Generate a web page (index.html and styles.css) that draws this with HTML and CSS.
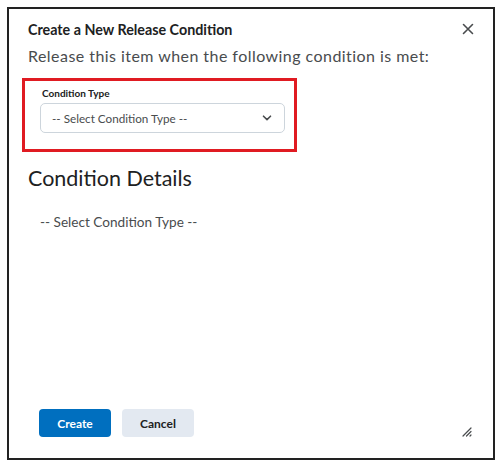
FILE: index.html
```html
<!DOCTYPE html>
<html lang="en">
  <head>
    <meta charset="UTF-8" />
    <title>Create a New Release Condition</title>
    <link rel="stylesheet" href="styles.css">
  </head>
  <body>
    <div class="dialog">
      <div class="dialog-header">
        <h2 class="dialog-title">Create a New Release Condition</h2>
        <button class="close-btn" aria-label="Close">
          <svg width="12" height="12" viewBox="0 0 12 12">
            <path d="M1.5 1.5 L10.5 10.5 M10.5 1.5 L1.5 10.5" stroke="#494c4e" stroke-width="1.6" stroke-linecap="round" />
          </svg>
        </button>
      </div>
      <p class="intro">Release this item when the following condition is met:</p>

      <div class="highlight">
        <label class="field-label" for="condition-type">Condition Type</label>
        <div class="select" id="condition-type">
          <span>-- Select Condition Type --</span>
          <svg width="10" height="6" viewBox="0 0 10 6">
            <path d="M1.5 1.2 L5 4.6 L8.5 1.2" fill="none" stroke="#494c4e" stroke-width="1.6" stroke-linecap="round" stroke-linejoin="round" />
          </svg>
        </div>
      </div>

      <h3 class="details-title">Condition Details</h3>
      <p class="details-empty">-- Select Condition Type --</p>

      <div class="dialog-footer">
        <button class="btn btn-primary">Create</button>
        <button class="btn btn-secondary">Cancel</button>
        <svg class="resize" width="10" height="10" viewBox="0 0 10 10">
          <path d="M1 9 L9 1 M4.5 9 L9 4.5 M8 9 L9 8" stroke="#494c4e" stroke-width="1.2" stroke-linecap="round" />
        </svg>
      </div>
    </div>
  </body>
</html>
```

FILE: styles.css
```css
* {
  margin: 0;
  padding: 0;
  box-sizing: border-box;
}

body {
  font-family: Lato, "Noto Sans", sans-serif;
  background-color: #ffffff;
  color: #202122;
}

.dialog {
  margin: 7px;
  width: 488px;
  height: 453px;
  border: 2px solid #222222;
  padding: 10px 18px 0 19px;
  display: flex;
  flex-direction: column;
}

.dialog-header {
  display: flex;
  align-items: center;
  justify-content: space-between;
  height: 20px;
}

.dialog-title {
  font-size: 14.3px;
  font-weight: 700;
  color: #202122;
}

.close-btn {
  background: none;
  border: none;
  width: 12px;
  height: 12px;
  margin-right: 1px;
  display: flex;
}

.intro {
  font-size: 16px;
  letter-spacing: 0.45px;
  color: #494c4e;
  margin-top: 7px;
  line-height: 20px;
}

.highlight {
  margin-top: 12px;
  margin-left: -6px;
  width: 275px;
  border: 3px solid #e01b22;
  padding: 6px 9px 16px 15px;
}

.field-label {
  display: block;
  margin-left: 2px;
  font-size: 10px;
  font-weight: 700;
  color: #202122;
  line-height: 12px;
}

.select {
  margin-top: 4px;
  height: 30px;
  border: 1px solid #cdd5dc;
  border-radius: 5px;
  display: flex;
  align-items: center;
  justify-content: space-between;
  padding: 0 12px 0 11px;
  font-size: 11.7px;
  color: #494c4e;
}

.details-title {
  font-size: 21.5px;
  font-weight: 400;
  color: #202122;
  margin-top: 12px;
  line-height: 28px;
}

.details-empty {
  font-size: 13.6px;
  color: #494c4e;
  margin-top: 21px;
  margin-left: 12px;
  line-height: 18px;
}

.dialog-footer {
  margin-top: auto;
  margin-bottom: 21px;
  display: flex;
  align-items: center;
  gap: 11px;
  padding-left: 11px;
}

.btn {
  height: 28px;
  width: 72px;
  border: none;
  border-radius: 4px;
  font-family: Lato, "Noto Sans", sans-serif;
  font-size: 12px;
  font-weight: 700;
}

.btn-primary {
  background-color: #006fbf;
  color: #ffffff;
}

.btn-secondary {
  background-color: #e3e9f1;
  color: #202122;
}

.resize {
  margin-left: auto;
  margin-right: 3px;
  align-self: flex-end;
}
```
